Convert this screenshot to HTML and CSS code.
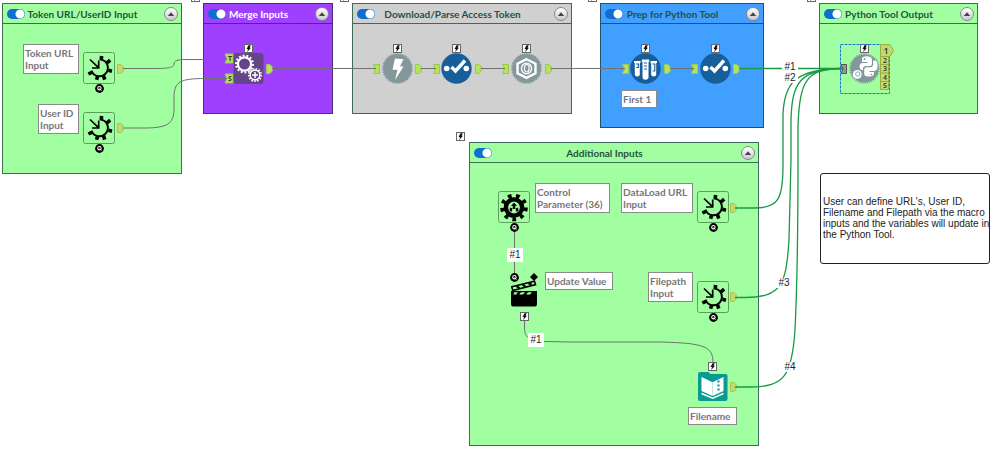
FILE: index.html
```html
<!DOCTYPE html>
<html lang="en">
  <head>
    <meta charset="UTF-8" />
    <meta name="viewport" content="width=device-width, initial-scale=1.0" />
    <title>Workflow</title>
    <link rel="stylesheet" href="styles.css">
  </head>
  <body>
    <svg class="defs" aria-hidden="true">
      <symbol id="bolt" viewBox="0 0 9 9">
        <rect x="0.5" y="0.5" width="8" height="8" fill="#fff" stroke="#666" />
        <path d="M4.5 1.2H6.8L5.6 3.7H7L3.2 8L4 5H2.5Z" fill="#111" />
      </symbol>
      <symbol id="question" viewBox="0 0 9 9">
        <circle cx="4.5" cy="4.5" r="4.4" fill="#000" />
        <circle cx="4.4" cy="4.2" r="1.7" fill="none" stroke="#fff" stroke-width="1.1" />
        <path d="M4.6 4.6L6.4 6.6" stroke="#fff" />
      </symbol>
      <symbol id="input-gear" viewBox="0 0 32 32">
        <rect x="0.5" y="0.5" width="31" height="31" rx="2" fill="none" stroke="#5c9f5c" />
        <g fill="none" stroke="#000">
          <path d="M18.5 7.6A8.5 8.5 0 1 1 8.5 19" stroke-width="2" />
          <path d="M18.2 8.5L18.6 4M24 10.8L27.2 8.2M25.5 18.3L29 19.2M20.4 23.6L21.8 27.6M14.8 23.6L13.6 27.8M10 19.8L5.4 22" stroke-width="3.6" />
          <path d="M7 7.5L15.5 15.7M15.7 8.5V16H9" stroke-width="1.7" />
        </g>
      </symbol>
      <symbol id="control-gear" viewBox="0 0 32 32">
        <rect x="0.5" y="0.5" width="31" height="31" rx="2" fill="none" stroke="#5c9f5c" />
        <g fill="none" stroke="#000">
          <circle cx="16" cy="16.5" r="8.1" stroke-width="4.4" />
          <circle cx="16" cy="16.5" r="11.6" stroke-width="4.4" pathLength="18" stroke-dasharray="0.9 1.1" />
        </g>
        <path d="M16 11.5L19 15H17.2V18H14.8V15H13ZM12 16.5L14.5 17.5L13.5 21L11.5 19.5ZM20 16.5L17.5 17.5L18.5 21L20.5 19.5Z" />
      </symbol>
      <symbol id="merge" viewBox="0 0 30 31">
        <rect width="30" height="31" rx="3" fill="#644589" />
        <g fill="none" stroke="#fff">
          <circle cx="11" cy="11" r="6.6" stroke-width="2.2" />
          <circle cx="11" cy="11" r="8.5" stroke-width="2" pathLength="28" stroke-dasharray="1 1" />
          <circle cx="21.5" cy="22" r="4.9" stroke-width="1.6" />
          <circle cx="21.5" cy="22" r="6.3" stroke-width="1.6" pathLength="26" stroke-dasharray="1 1" />
          <path d="M21.5 19V25M18.5 22H24.5" stroke-width="1.5" />
        </g>
      </symbol>
      <symbol id="download" viewBox="0 0 31 31">
        <circle cx="15.5" cy="15.5" r="14.4" fill="#84989c" />
        <circle cx="15.5" cy="15.5" r="14.6" fill="none" stroke="#84989c" stroke-width="1.6" pathLength="80" stroke-dasharray="1 1" />
        <path d="M13 5.5L21.5 6.2L18 13.5H21.5L13 27L15.5 16.8H10.5Z" fill="#fff" />
      </symbol>
      <symbol id="select" viewBox="0 0 31 31">
        <circle cx="15.5" cy="15.5" r="15.2" fill="#175f9b" />
        <circle cx="5.7" cy="15.5" r="2.8" fill="#fff" />
        <circle cx="25.3" cy="15.5" r="2.8" fill="#fff" />
        <path d="M10.5 14L14.5 18L24 7.5" fill="none" stroke="#fff" stroke-width="3.4" />
      </symbol>
      <symbol id="json" viewBox="0 0 31 31">
        <circle cx="15.5" cy="15.5" r="14.4" fill="#84989c" />
        <circle cx="15.5" cy="15.5" r="14.6" fill="none" stroke="#84989c" stroke-width="1.6" pathLength="80" stroke-dasharray="1 1" />
        <path d="M15.5 6.2L24.5 10.8V20.2L15.5 24.8L6.5 20.2V10.8Z" fill="#84989c" stroke="#fff" stroke-width="2.4" />
        <ellipse cx="15.5" cy="15.5" rx="5" ry="5.4" fill="none" stroke="#fff" stroke-width="1.4" />
        <ellipse cx="15.8" cy="15.2" rx="2.3" ry="3.7" fill="none" stroke="#fff" stroke-width="1.2" />
      </symbol>
      <symbol id="sample" viewBox="0 0 31 31">
        <circle cx="15.5" cy="15.5" r="15.2" fill="#175f9b" />
        <path d="M4 8H10.5V10H9.8V21.5Q9.8 23.5 7.3 23.5T4.8 21.5V10H4ZM11.8 6.5H19.2V8.7H18.5V24Q18.5 26.7 15.5 26.7T12.5 24V8.7H11.8ZM20.5 8H27V10H26.2V21.5Q26.2 23.5 23.7 23.5T21.2 21.5V10H20.5Z" fill="#fff" />
        <path d="M6.2 11H8.4V14.5H6.2M14 10H17M14 13H17M14 16H17M22.6 11H24.8V18H22.6" fill="none" stroke="#175f9b" stroke-width="1.1" />
      </symbol>
      <symbol id="python" viewBox="0 0 31 31">
        <circle cx="15.5" cy="15.5" r="14" fill="#84989c" />
        <circle cx="15.5" cy="15.5" r="14.4" fill="none" stroke="#84989c" stroke-width="1.8" pathLength="76" stroke-dasharray="1 1" />
        <path d="M14 4Q18 2.5 21.5 4Q23 4.8 23 7V10.5Q23 13 20.5 13H17Q14 13 14 16V17H12.5Q10.5 16.5 10.5 13.5T13 10H18.5V9H13V6Q13 4.5 14 4Z" fill="#fff" />
        <path d="M24.2 7.5H26Q28.5 8 28.5 12.5T26 18H20.5V19H25V21Q24.5 23.5 20 23.5T15.2 21V17Q15.2 14.2 18 14.2H21.5Q24.2 14 24.2 11Z" fill="#fff" />
        <circle cx="8.3" cy="21.3" r="4.4" fill="#fff" />
        <circle cx="8.8" cy="21" r="2.2" fill="none" stroke="#84989c" stroke-width="0.9" />
        <circle cx="15.5" cy="6" r="0.9" fill="#84989c" />
        <circle cx="22.5" cy="21.3" r="0.9" fill="#84989c" />
      </symbol>
      <symbol id="action" viewBox="0 0 32 36">
        <path d="M24 0L28 4L24 8L20 4Z" />
        <path d="M1 18H27V31Q27 33.5 25 33.5H3Q1 33.5 1 31Z" />
        <path d="M1.8 13.8L24.5 8.3L25.5 11.6L2.8 17.5Z" fill="#a1ffa1" stroke="#000" stroke-width="1.6" />
        <path d="M6.5 13.2L9.5 15.2M12.5 11.6L15.5 13.6M18.5 10L21.5 11.8" stroke="#000" stroke-width="2.2" />
        <path d="M4.2 19.2H8L6.2 21.4H3.4ZM11 19.2H15L13 21.4H9.2ZM18 19.2H22L20 21.4H16.2Z" fill="#a1ffa1" />
      </symbol>
      <symbol id="browse-file" viewBox="0 0 30 31">
        <path d="M2.5 1H11L13 3H28Q30 3 30 5V28Q30 30 28 30H2.5Q0.5 30 0.5 28V3Q0.5 1 2.5 1Z" fill="#0a9a92" />
        <path d="M4 6L15 11.3V25L4 20Z" fill="#fff" />
        <path d="M15 11.3L26 6V20L15 25Z" fill="#fff" />
        <path d="M4 22.5L15.2 27.2L26 22.5" fill="none" stroke="#fff" stroke-width="1.4" />
        <path d="M21 9.5V11.5M21 13.5V15.5M21 17.5V19.5" stroke="#0a9a92" stroke-width="2.2" />
      </symbol>
      <symbol id="arrow-up" viewBox="0 0 8 6">
        <path d="M0.8 5L4 1.2L7.2 5Z" fill="#444" />
      </symbol>
      <symbol id="anchor-in" viewBox="0 0 7 10">
        <path d="M0.5 0.5H6.5V9.5H0.5L2.5 5Z" />
      </symbol>
      <symbol id="anchor-out" viewBox="0 0 7 10">
        <path d="M0.5 0.5H4L6.3 3V7L4 9.5H0.5Z" />
      </symbol>
    </svg>

    <main class="canvas">
      <section class="box box-token">
        <header class="box-header">
          <input type="checkbox" class="toggle" aria-label="Enable Token URL/UserID Input" checked />
          <h2>Token URL/UserID Input</h2>
          <button class="collapse" aria-label="Collapse"><svg><use href="#arrow-up" /></svg></button>
        </header>
      </section>
      <section class="box box-merge">
        <header class="box-header">
          <input type="checkbox" class="toggle" aria-label="Enable Merge Inputs" checked />
          <h2>Merge Inputs</h2>
          <button class="collapse" aria-label="Collapse"><svg><use href="#arrow-up" /></svg></button>
        </header>
      </section>
      <section class="box box-download">
        <header class="box-header">
          <input type="checkbox" class="toggle" aria-label="Enable Download/Parse Access Token" checked />
          <h2>Download/Parse Access Token</h2>
          <button class="collapse" aria-label="Collapse"><svg><use href="#arrow-up" /></svg></button>
        </header>
      </section>
      <section class="box box-prep">
        <header class="box-header">
          <input type="checkbox" class="toggle" aria-label="Enable Prep for Python Tool" checked />
          <h2>Prep for Python Tool</h2>
          <button class="collapse" aria-label="Collapse"><svg><use href="#arrow-up" /></svg></button>
        </header>
      </section>
      <section class="box box-python">
        <header class="box-header">
          <input type="checkbox" class="toggle" aria-label="Enable Python Tool Output" checked />
          <h2>Python Tool Output</h2>
          <button class="collapse" aria-label="Collapse"><svg><use href="#arrow-up" /></svg></button>
        </header>
      </section>
      <section class="box box-additional">
        <header class="box-header">
          <input type="checkbox" class="toggle" aria-label="Enable Additional Inputs" checked />
          <h2>Additional Inputs</h2>
          <button class="collapse" aria-label="Collapse"><svg><use href="#arrow-up" /></svg></button>
        </header>
      </section>

      <!-- connections and anchors -->
      <svg class="wires">
        <g class="anchor">
          <use href="#anchor-in" x="373" y="64" width="7" height="10" />
          <use href="#anchor-in" x="433" y="64" width="7" height="10" />
          <use href="#anchor-in" x="502" y="64" width="7" height="10" />
          <use href="#anchor-in" x="622" y="64" width="7" height="10" />
          <use href="#anchor-in" x="691" y="64" width="7" height="10" />
          <use href="#anchor-out" x="266" y="64" width="7" height="10" />
          <use href="#anchor-out" x="415" y="64" width="7" height="10" />
          <use href="#anchor-out" x="475" y="64" width="7" height="10" />
          <use href="#anchor-out" x="545" y="64" width="7" height="10" />
          <use href="#anchor-out" x="664" y="64" width="7" height="10" />
          <use href="#anchor-out" x="733" y="64" width="7" height="10" />
          <path d="M225 54H233V63H225L227 58.5ZM225 74H233V83H225L227 78.5Z" />
        </g>
        <g class="anchor anchor-macro">
          <use href="#anchor-out" x="117" y="64" width="7" height="10" />
          <use href="#anchor-out" x="117" y="123" width="7" height="10" />
          <use href="#anchor-out" x="730" y="203" width="7" height="10" />
          <use href="#anchor-out" x="730" y="292" width="7" height="10" />
          <use href="#anchor-out" x="730" y="382" width="7" height="10" />
        </g>
        <g class="anchor-text">
          <text x="230" y="61">T</text>
          <text x="230" y="81">S</text>
        </g>
        <g class="wire">
          <path d="M123 68.5H155C171 68.5 174 67 174 64S177 59.5 186 59.5H227" />
          <path d="M123 128H145C170 128 174 122 174 108V95C175 82 180 78.5 205 78.5H227" />
          <path d="M272 68.5H376M421 68.5H436M481 68.5H505M551 68.5H625M670 68.5H694" />
          <path d="M514.5 230V274" />
          <path d="M524.5 320V329C525 338 530 341 545 341.5L570 342H660C706 343 713 347 713 363" />
        </g>
        <g class="wire wire-green">
          <path d="M739 68.5H843" />
          <path d="M735 208H755C779 208 783 198 783 165V115C784 82 796 69 843 68.5" />
          <path d="M735 297.5H745C782 297 786 285 789 240L791 160V120C792 82 800 69 843 68.5" />
          <path d="M735 387H750C785 387 792 375 795 330C797 290 798 250 798 160V125C800 80 806 69 843 68.5" />
        </g>
      </svg>

      <svg class="flag flag-merge"><use href="#bolt" /></svg>
      <svg class="flag flag-download"><use href="#bolt" /></svg>
      <svg class="flag flag-prep"><use href="#bolt" /></svg>
      <svg class="flag flag-python"><use href="#bolt" /></svg>
      <svg class="flag flag-additional"><use href="#bolt" /></svg>

      <!-- tools -->
      <div class="tool tool-token-url">
        <svg class="icon"><use href="#input-gear" /></svg>
        <svg class="badge"><use href="#question" /></svg>
      </div>
      <div class="tool tool-user-id">
        <svg class="icon"><use href="#input-gear" /></svg>
        <svg class="badge"><use href="#question" /></svg>
      </div>
      <div class="tool tool-merge">
        <svg class="badge"><use href="#bolt" /></svg>
        <svg class="icon"><use href="#merge" /></svg>
      </div>
      <div class="tool tool-download">
        <svg class="badge"><use href="#bolt" /></svg>
        <svg class="icon"><use href="#download" /></svg>
      </div>
      <div class="tool tool-select">
        <svg class="badge"><use href="#bolt" /></svg>
        <svg class="icon"><use href="#select" /></svg>
      </div>
      <div class="tool tool-json">
        <svg class="badge"><use href="#bolt" /></svg>
        <svg class="icon"><use href="#json" /></svg>
      </div>
      <div class="tool tool-sample">
        <svg class="badge"><use href="#bolt" /></svg>
        <svg class="icon"><use href="#sample" /></svg>
      </div>
      <div class="tool tool-select-2">
        <svg class="badge"><use href="#bolt" /></svg>
        <svg class="icon"><use href="#select" /></svg>
      </div>
      <div class="tool tool-python">
        <svg class="badge"><use href="#bolt" /></svg>
        <svg class="icon"><use href="#python" /></svg>
      </div>
      <svg class="python-ports">
        <rect class="selection" x="0.5" y="0.5" width="49" height="49" />
        <path class="port-in" d="M1 20.5H6.5V29.5H1L3 25Z" />
        <path class="port" d="M40.5 12.5H48.5V45.5H40.5ZM40.5 20.5H48.5M40.5 29H48.5M40.5 37.5H48.5" />
        <path class="port" d="M40.5 0.5H50L53.5 6.5L50 12.5H40.5Z" />
        <text class="first" x="46" y="10">1</text>
        <text x="45" y="19">2</text>
        <text x="45" y="27">3</text>
        <text x="45" y="36">4</text>
        <text x="45" y="44">5</text>
      </svg>
      <div class="tool tool-control">
        <svg class="icon"><use href="#control-gear" /></svg>
        <svg class="badge"><use href="#question" /></svg>
      </div>
      <svg class="flag flag-action"><use href="#question" /></svg>
      <div class="tool tool-action">
        <svg class="icon"><use href="#action" /></svg>
        <svg class="badge"><use href="#bolt" /></svg>
      </div>
      <div class="tool tool-dataload">
        <svg class="icon"><use href="#input-gear" /></svg>
        <svg class="badge"><use href="#question" /></svg>
      </div>
      <div class="tool tool-filepath">
        <svg class="icon"><use href="#input-gear" /></svg>
        <svg class="badge"><use href="#question" /></svg>
      </div>
      <div class="tool tool-filename">
        <svg class="badge"><use href="#bolt" /></svg>
        <svg class="icon"><use href="#browse-file" /></svg>
      </div>

      <!-- annotations -->
      <p class="note note-token-url">Token URL<br />Input</p>
      <p class="note note-user-id">User ID<br />Input</p>
      <p class="note note-first">First 1</p>
      <p class="note note-control">Control<br />Parameter (36)</p>
      <p class="note note-update">Update Value</p>
      <p class="note note-dataload">DataLoad URL<br />Input</p>
      <p class="note note-filepath">Filepath<br />Input</p>
      <p class="note note-filename">Filename</p>

      <span class="wire-label label-control">#1</span>
      <span class="wire-label label-action">#1</span>
      <span class="wire-label label-1">#1</span>
      <span class="wire-label label-2">#2</span>
      <span class="wire-label label-3">#3</span>
      <span class="wire-label label-4">#4</span>

      <p class="comment">User can define URL's, User ID,<br />Filename and Filepath via the macro<br />inputs and the variables will update in<br />the Python Tool.</p>
    </main>
  </body>
</html>
```

FILE: styles.css
```css
* {
  margin: 0;
  padding: 0;
  box-sizing: border-box;
}
body {
  background-color: #fff;
  font-family: "Open Sans", "Noto Sans", sans-serif;
}
.defs {
  position: absolute;
  width: 0;
  height: 0;
}
.canvas {
  position: relative;
  min-height: 100vh;
  overflow: hidden;
}

/* containers */
.box {
  position: absolute;
  border: 1px solid #3d6b56;
  background-color: #a1ffa1;
  color: #24523f;
}
.box-header {
  display: flex;
  align-items: center;
  height: 20px;
  padding: 0 3px 0 4px;
  border-bottom: 1px solid #3d6b56;
}
.box-header h2 {
  flex: 1;
  margin-right: 24px;
  font-family: Lato, sans-serif;
  font-size: 10px;
  font-weight: 700;
  line-height: 12px;
  text-align: center;
  white-space: nowrap;
}
.toggle {
  appearance: none;
  width: 18px;
  height: 10px;
  border-radius: 5px;
  background: radial-gradient(circle at 13px 5px, #fff 4px, #0f6fd0 5px);
}
.collapse {
  display: flex;
  align-items: center;
  justify-content: center;
  width: 14px;
  height: 14px;
  border: 1px solid #888;
  border-radius: 50%;
  background: linear-gradient(#fff, #c8c8d4);
}
.collapse svg {
  width: 8px;
  height: 6px;
}
.box-token {
  left: 2px;
  top: 3px;
  width: 180px;
  height: 171px;
}
.box-merge {
  left: 203px;
  top: 3px;
  width: 130px;
  height: 111px;
  background-color: #a040ff;
  border-color: #4a2f78;
  color: #fff;
}
.box-merge .box-header {
  border-color: #4a2f78;
}
.box-download {
  left: 352px;
  top: 3px;
  width: 220px;
  height: 111px;
  background-color: #d0d0d0;
}
.box-prep {
  left: 600px;
  top: 3px;
  width: 164px;
  height: 125px;
  background-color: #409fff;
  border-color: #25506e;
}
.box-prep .box-header {
  border-color: #25506e;
}
.box-python {
  left: 819px;
  top: 3px;
  width: 159px;
  height: 111px;
}
.box-additional {
  left: 469px;
  top: 142px;
  width: 290px;
  height: 304px;
}

/* connections */
.wires {
  position: absolute;
  left: 0;
  top: 0;
  width: 100%;
  height: 100%;
  overflow: visible;
}
.wire {
  fill: none;
  stroke: #707070;
}
.wire-green {
  stroke: #189a45;
  stroke-width: 1.3;
}
.anchor {
  fill: #b4e35c;
  stroke: #9cc850;
}
.anchor-macro {
  fill: #c3d96a;
  stroke: #a9c455;
}
.anchor-text {
  font-size: 7px;
  font-weight: 700;
  text-anchor: middle;
  fill: #333;
}

/* tools */
.tool {
  position: absolute;
  display: flex;
  flex-direction: column;
  align-items: center;
}
.icon {
  width: 32px;
  height: 32px;
}
.badge,
.flag {
  width: 9px;
  height: 9px;
}
.flag {
  position: absolute;
}
.tool-token-url {
  left: 83px;
  top: 52px;
}
.tool-user-id {
  left: 83px;
  top: 112px;
}
.tool-merge,
.tool-download,
.tool-select,
.tool-json,
.tool-sample,
.tool-select-2,
.tool-python {
  top: 44px;
}
.tool-merge .icon,
.tool-download .icon,
.tool-select .icon,
.tool-json .icon,
.tool-sample .icon,
.tool-select-2 .icon,
.tool-python .icon,
.tool-filename .icon {
  width: 31px;
  height: 31px;
}
.tool-merge {
  left: 233px;
}
.tool-download {
  left: 382px;
}
.tool-select {
  left: 441px;
}
.tool-json {
  left: 511px;
}
.tool-sample {
  left: 630px;
}
.tool-select-2 {
  left: 700px;
}
.tool-python {
  left: 849px;
}
.tool-control {
  left: 498px;
  top: 191px;
}
.tool-action {
  left: 510px;
  top: 273px;
}
.tool-action .icon {
  width: 32px;
  height: 36px;
}
.tool-action .badge {
  align-self: flex-start;
  margin: 3px 0 0 10px;
}
.tool-dataload {
  left: 697px;
  top: 191px;
}
.tool-filepath {
  left: 697px;
  top: 281px;
}
.tool-filename {
  left: 697px;
  top: 362px;
}
.flag-merge {
  left: 191px;
  top: -7px;
}
.flag-download {
  left: 340px;
  top: -7px;
}
.flag-prep {
  left: 588px;
  top: -7px;
}
.flag-python {
  left: 807px;
  top: -7px;
}
.flag-additional {
  left: 456px;
  top: 132px;
}
.flag-action {
  left: 510px;
  top: 273px;
}
.python-ports {
  position: absolute;
  left: 840px;
  top: 44px;
  width: 56px;
  height: 52px;
  font-size: 7px;
  font-weight: 600;
  text-anchor: middle;
  fill: #333;
}
.python-ports .first {
  font-size: 9px;
}
.selection {
  fill: none;
  stroke: #1478d0;
  stroke-dasharray: 3 1;
}
.port {
  fill: #c3d96a;
  stroke: #98ad45;
}
.port-in {
  fill: #8f9f8f;
  stroke: #555;
}

/* annotations */
.note {
  position: absolute;
  padding: 2px 1px;
  border: 1px solid #8a8a8a;
  background-color: #fff;
  color: #777;
  font-family: Lato, sans-serif;
  font-size: 10px;
  font-weight: 700;
  line-height: 12px;
  white-space: nowrap;
}
.note-token-url {
  left: 23px;
  top: 44px;
  width: 56px;
}
.note-user-id {
  left: 38px;
  top: 104px;
  width: 41px;
}
.note-first {
  left: 621px;
  top: 90px;
  width: 36px;
}
.note-control {
  left: 535px;
  top: 183px;
  width: 75px;
}
.note-update {
  left: 545px;
  top: 272px;
  width: 68px;
}
.note-dataload {
  left: 621px;
  top: 183px;
  width: 72px;
}
.note-filepath {
  left: 648px;
  top: 272px;
  width: 45px;
}
.note-filename {
  left: 688px;
  top: 407px;
  width: 49px;
}
.wire-label {
  position: absolute;
  width: 16px;
  background-color: #fff;
  color: #222;
  font-family: "Liberation Sans", Arial, sans-serif;
  font-size: 10px;
  line-height: 10px;
  text-align: center;
}
.label-control,
.label-action {
  line-height: 14px;
}
.label-control {
  left: 507px;
  top: 248px;
}
.label-action {
  left: 528px;
  top: 333px;
}
.label-1 {
  left: 782px;
  top: 62px;
}
.label-2 {
  left: 782px;
  top: 73px;
}
.label-3 {
  left: 776px;
  top: 278px;
}
.label-4 {
  left: 782px;
  top: 362px;
}
.comment {
  position: absolute;
  left: 820px;
  top: 173px;
  display: flex;
  align-items: center;
  width: 170px;
  height: 91px;
  padding: 0 2px 2px;
  border: 1px solid #222;
  border-radius: 3px;
  background-color: #fff;
  color: #222;
  font-family: "Liberation Sans", Arial, sans-serif;
  font-size: 10px;
  line-height: 11px;
  white-space: nowrap;
}
```
